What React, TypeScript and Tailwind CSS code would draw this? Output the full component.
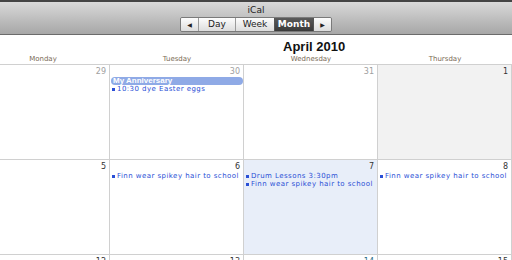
import React from "react";

type Ev = { text: string; allDay?: boolean };
type Cell = { n: number; other?: boolean; bg?: string; numColor?: string; events?: Ev[] };

const rows: Cell[][] = [
  [
    { n: 29, other: true },
    { n: 30, other: true, events: [{ text: "My Anniversary", allDay: true }, { text: "10:30 dye Easter eggs" }] },
    { n: 31, other: true },
    { n: 1, bg: "bg-[#f2f2f2]" },
  ],
  [
    { n: 5 },
    { n: 6, events: [{ text: "Finn wear spikey hair to school" }] },
    { n: 7, bg: "bg-[#e8eef9]", events: [{ text: "Drum Lessons 3:30pm" }, { text: "Finn wear spikey hair to school" }] },
    { n: 8, events: [{ text: "Finn wear spikey hair to school" }] },
  ],
  [
    { n: 12 },
    { n: 13 },
    { n: 14, numColor: "text-[#2b6f8a]" },
    { n: 15 },
  ],
];

const days = ["Monday", "Tuesday", "Wednesday", "Thursday"];

export default function App() {
  return (
    <div className="w-[512px] h-[260px] overflow-hidden bg-white font-['DejaVu_Sans',sans-serif]">
      {/* toolbar */}
      <div className="h-[2px] bg-[#444]" />
      <div className="h-[33px] bg-gradient-to-b from-[#d9d9d9] to-[#a7a7a7] border-b border-[#6b6b6b] flex flex-col items-center">
        <div className="text-[9px] leading-[11px] mt-[3px] text-[#222]">iCal</div>
        <div className="mt-[1px] flex h-[15px] border border-[#7a7a7a] rounded-[2px] overflow-hidden text-[9px]">
          <div className="w-[18px] flex items-center justify-center bg-gradient-to-b from-[#fdfdfd] to-[#dcdcdc] border-r border-[#9a9a9a] text-[#222] text-[6px]">◀</div>
          <div className="w-[37px] flex items-center justify-center bg-gradient-to-b from-[#fdfdfd] to-[#dcdcdc] border-r border-[#9a9a9a] text-[#222]">Day</div>
          <div className="w-[39px] flex items-center justify-center bg-gradient-to-b from-[#fdfdfd] to-[#dcdcdc] border-r border-[#555] text-[#222]">Week</div>
          <div className="w-[39px] flex items-center justify-center bg-gradient-to-b from-[#5a5a5a] to-[#3a3a3a] border-r border-[#555] text-white font-bold">Month</div>
          <div className="w-[17px] flex items-center justify-center bg-gradient-to-b from-[#fdfdfd] to-[#dcdcdc] text-[#222] text-[6px]">▶</div>
        </div>
      </div>
      {/* title */}
      <div className="relative h-[21px]">
        <div className="absolute left-[283px] top-[4px] text-[13px] leading-[15px] font-bold text-[#111] font-['Liberation_Sans',sans-serif]">April 2010</div>
      </div>
      <div className="ml-[-24px] w-[536px]">
        <div className="flex h-[8px]">
          {days.map((d) => (
            <div key={d} className="w-[134px] text-center text-[7px] leading-[7px] text-[#7a6a55]">
              {d}
            </div>
          ))}
        </div>
        <div className="border-t border-[#d0d0d0]">
          {rows.map((row, ri) => (
            <div key={ri} className="flex h-[95px] border-b border-[#d0d0d0]">
              {row.map((c, ci) => (
                <div key={ci} className={`w-[134px] border-r border-[#d0d0d0] flex flex-col ${c.bg ?? "bg-white"}`}>
                  <div
                    className={`text-right pr-[3px] pt-[2px] text-[8px] leading-[10px] ${
                      c.numColor ?? (c.other ? "text-[#a0a0a0]" : "text-[#333]")
                    }`}
                  >
                    {c.n}
                  </div>
                  <div className="flex flex-col">
                    {(c.events ?? []).map((e, ei) =>
                      e.allDay ? (
                        <div key={ei} className="h-[8px] ml-[1px] rounded-[4px] bg-[#8faae6] text-white font-bold text-[8px] leading-[8px] pl-[2px] font-['Liberation_Sans',sans-serif]">
                          {e.text}
                        </div>
                      ) : (
                        <div key={ei} className="flex items-center h-[7px] pl-[2px] text-[7px] leading-[7px] tracking-[0.45px] text-[#2a4fd6] mt-[1px] whitespace-nowrap">
                          <span className="w-[3px] h-[3px] bg-[#2a4fd6] mr-[2px] inline-block shrink-0" />
                          {e.text}
                        </div>
                      )
                    )}
                  </div>
                </div>
              ))}
            </div>
          ))}
        </div>
      </div>
    </div>
  );
}
